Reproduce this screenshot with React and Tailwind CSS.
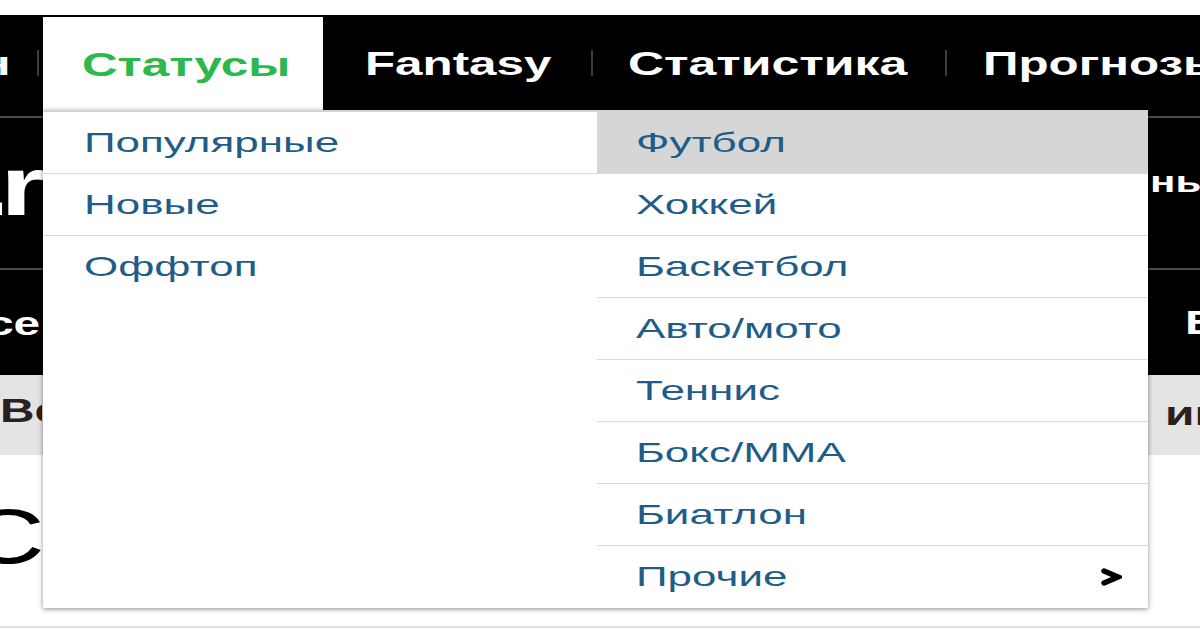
import React from "react";

const leftItems = ["Популярные", "Новые", "Оффтоп"];
const rightItems = ["Футбол", "Хоккей", "Баскетбол", "Авто/мото", "Теннис", "Бокс/ММА", "Биатлон", "Прочие"];

function W({ children, className = "" }) {
  return <span className={"inline-block whitespace-nowrap leading-none " + className}>{children}</span>;
}

function Sep() {
  return <div className="w-[2px] h-[26px] bg-[#3c3c3c] self-center" />;
}

export default function App() {
  return (
    <div className="relative w-[1200px] h-[630px] overflow-hidden bg-white font-['Liberation_Sans',Arial,sans-serif]">
      <div className="h-[15px] bg-white" />
      <nav className="h-[95px] bg-black flex items-stretch text-white font-bold text-[34px]">
        <div className="w-[10px] overflow-hidden flex items-center justify-end">
          <W className="origin-right scale-x-[1.45]">ан</W>
        </div>
        <div className="w-[33px] flex items-center pl-[27px]">
          <div className="w-[2px] h-[26px] bg-[#3c3c3c]" />
        </div>
        <div className="mt-[2px] w-[280px] bg-white flex items-center pl-[39px] text-[#2db84b]">
          <W className="origin-left scale-x-[1.45]">Статусы</W>
        </div>
        <div className="w-[268px] flex items-center pl-[42px]">
          <W className="origin-left scale-x-[1.45]">Fantasy</W>
        </div>
        <Sep />
        <div className="w-[352px] flex items-center pl-[35px]">
          <W className="origin-left scale-x-[1.47]">Статистика</W>
        </div>
        <Sep />
        <div className="flex-1 flex items-center pl-[36px] overflow-hidden">
          <W className="origin-left scale-x-[1.45]">Прогнозы</W>
        </div>
      </nav>

      <div className="h-[6px] bg-black" />
      <div className="h-[2px] bg-[#4a4a4a]" />
      <div className="h-[150px] bg-black flex justify-between text-white font-bold overflow-hidden leading-none">
        <div className="flex items-start pt-[27px] text-[83px]">
          <W className="origin-left scale-x-[1.4] -ml-[77px] tracking-[-7px]">s.r</W>
        </div>
        <div className="w-[50px] overflow-hidden flex items-start pt-[50px] text-[29px]">
          <W className="origin-left scale-x-[1.45]">ные</W>
        </div>
      </div>
      <div className="h-[2px] bg-[#4a4a4a]" />
      <div className="h-[105px] bg-black flex justify-between text-white font-bold text-[33px] overflow-hidden leading-none">
        <div className="w-[40px] overflow-hidden flex justify-end items-start pt-[37px]">
          <W className="origin-right scale-x-[1.45]">Space</W>
        </div>
        <div className="w-[15px] overflow-hidden flex items-start pt-[36px]">
          <W className="origin-left scale-x-[1.45]">Блоги</W>
        </div>
      </div>
      <div className="h-[80px] bg-[#e4e4e4] flex justify-between text-[#2b2020] font-bold text-[33px] overflow-hidden leading-none">
        <div className="w-[42px] overflow-hidden flex items-start pt-[19px]">
          <W className="origin-left scale-x-[1.45]">Ве</W>
        </div>
        <div className="w-[35px] overflow-hidden flex items-start pt-[22px]">
          <W className="origin-left scale-x-[1.45]">ин</W>
        </div>
      </div>
      <div className="h-[171px] bg-white flex overflow-hidden text-black text-[78px] leading-none">
        <div className="flex items-start pt-[42px] -ml-[34px]">
          <W className="origin-left scale-x-[1.4]">Ст</W>
        </div>
      </div>
      <div className="h-[2px] bg-[#e2e2e2]" />

      <div className="absolute left-[43px] top-[110px] w-[1105px] h-[498px] bg-white border-t-2 border-[#d4d4d4] shadow-[0_1px_5px_rgba(0,0,0,0.45)] flex text-[28px] text-[#1f5d89]">
        <div className="w-[554px] flex flex-col">
          {leftItems.map((t, i) => (
            <div
              key={t}
              className={
                "h-[62px] flex items-center pl-[41px] " + (i < leftItems.length - 1 ? "border-b border-[#dadada]" : "")
              }
            >
              <W className="origin-left scale-x-[1.57]">{t}</W>
            </div>
          ))}
        </div>
        <div className="flex-1 flex flex-col">
          {rightItems.map((t, i) => (
            <div
              key={t}
              className={
                "h-[62px] flex items-center justify-between pl-[39px] pr-[26px] " +
                (i === 0 ? "bg-[#d6d6d6] " : "") +
                (i < rightItems.length - 1 ? "border-b border-[#dadada]" : "")
              }
            >
              <W className="origin-left scale-x-[1.57]">{t}</W>
              {t === "Прочие" && (
                <svg width="22" height="18" viewBox="0 0 22 18" className="text-black">
                  <path d="M4 3 L18 9 L4 15" fill="none" stroke="currentColor" strokeWidth="5.5" strokeLinejoin="miter" strokeLinecap="round" />
                </svg>
              )}
            </div>
          ))}
        </div>
      </div>
    </div>
  );
}
